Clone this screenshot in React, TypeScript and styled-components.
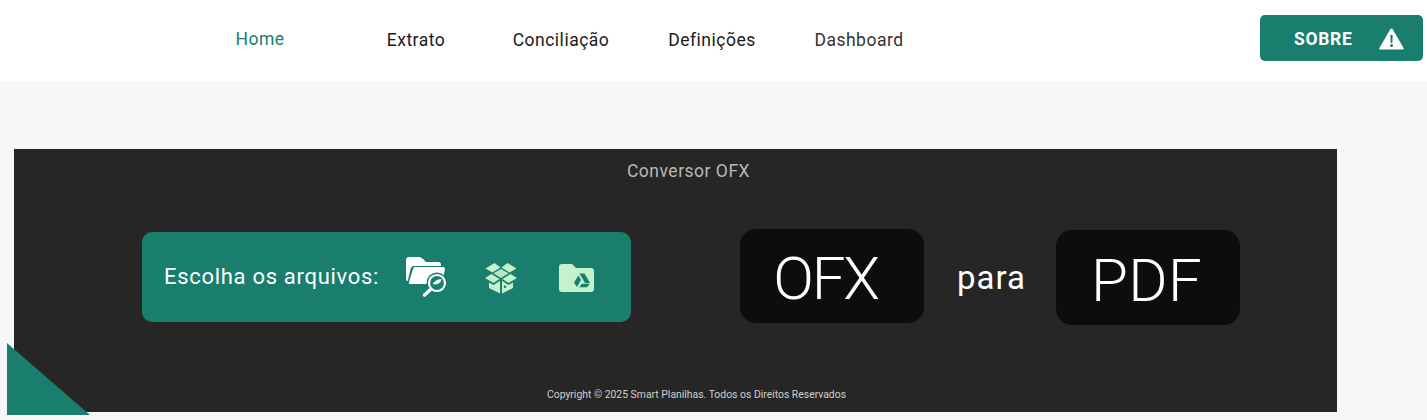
import React from "react";
import styled, { createGlobalStyle } from "styled-components";

const Global = createGlobalStyle`
  html, body { margin: 0; padding: 0; background: #f7f7f7; overflow: hidden; }
  body { font-family: Roboto, "Liberation Sans", sans-serif; }
`;
const Page = styled.div`
  position: relative;
  width: 1427px;
  height: 420px;
  overflow: hidden;
`;
const Header = styled.header`
  height: 81px;
  background: #fff;
  display: flex;
  align-items: center;
  padding-left: 180px;
  padding-right: 4px;
`;
const Nav = styled.nav`
  display: flex;
  align-items: center;
  flex: 1;
`;
const NavLink = styled.a<{ $w: number; $color?: string; $up?: boolean }>`
  width: ${(p) => p.$w}px;
  text-align: center;
  font-size: 17.5px;
  font-weight: 400;
  letter-spacing: 0.5px;
  color: ${(p) => p.$color || "#1a1a1a"};
  margin-top: ${(p) => (p.$up ? -4 : -1)}px;
`;
const AboutButton = styled.button`
  width: 163px;
  height: 46px;
  margin-top: -5px;
  border: 0;
  border-radius: 5px;
  background: #197e6d;
  color: #fff;
  display: flex;
  align-items: center;
  padding: 1px 19px 0 34px;
  justify-content: space-between;
  font-family: inherit;
  font-size: 17.5px;
  font-weight: 700;
  letter-spacing: 0.7px;
`;
const Card = styled.main`
  margin: 68px 0 0 14px;
  width: 1323px;
  height: 263px;
  background: #262626;
  display: flex;
  flex-direction: column;
  color: #fff;
`;
const Title = styled.div`
  height: 44px;
  padding-left: 26px;
  display: flex;
  align-items: center;
  justify-content: center;
  font-size: 17.5px;
  font-weight: 400;
  letter-spacing: 0.5px;
  color: #b8b8b8;
`;
const Row = styled.div`
  display: flex;
  align-items: flex-start;
  height: 96px;
  margin-top: 36px;
  padding-left: 128px;
`;
const Upload = styled.div`
  width: 489px;
  height: 90px;
  background: #197e6d;
  border-radius: 10px;
  display: flex;
  align-items: center;
  padding-left: 22px;
  box-sizing: border-box;
  margin-right: 109px;
  margin-top: 3px;
`;
const UploadLabel = styled.span`
  width: 242px;
  margin-top: -2px;
  font-size: 22px;
  font-weight: 400;
  letter-spacing: 0.7px;
  white-space: nowrap;
`;
const IconSlot = styled.span<{ $w: number; $nudge?: number }>`
  width: ${(p) => p.$w}px;
  display: flex;
  align-items: center;
  margin-top: ${(p) => p.$nudge || 0}px;
`;
const Format = styled.div<{ $h: number; $top?: number; $right: number; $spacing: number }>`
  width: 184px;
  height: ${(p) => p.$h}px;
  margin-top: ${(p) => p.$top || 0}px;
  box-sizing: border-box;
  padding: 5px ${(p) => p.$right}px 0 0;
  background: #0d0d0d;
  border-radius: 16px;
  display: flex;
  align-items: center;
  justify-content: center;
  font-size: 60px;
  font-weight: 300;
  letter-spacing: ${(p) => p.$spacing}px;
  color: #fff;
`;
const Para = styled.div`
  width: 132px;
  margin-top: 29px;
  padding-left: 3px;
  box-sizing: border-box;
  text-align: center;
  font-size: 33px;
  font-weight: 400;
  letter-spacing: 1px;
`;
const Copyright = styled.footer`
  margin-top: 63px;
  padding-left: 42px;
  text-align: center;
  font-size: 10.4px;
  color: #cfcfcf;
`;
const Corner = styled.div`
  position: absolute;
  left: 7px;
  top: 343px;
  width: 83px;
  height: 72px;
  background: #197e6d;
  clip-path: polygon(0 0, 100% 100%, 0 100%);
`;

const Warning = () => (
  <svg width="25" height="22" viewBox="0 0 25 22">
    <path fillRule="evenodd" fill="#fff" d="M12.5 0.5 C13 0.5 13.4 0.8 13.7 1.3 L24.6 20 C25 20.8 24.5 21.6 23.6 21.6 H1.4 C0.5 21.6 0 20.8 0.4 20 L11.3 1.3 C11.6 0.8 12 0.5 12.5 0.5 Z M11.3 7 L11.7 15 H13.3 L13.7 7 Z M12.5 16 A1.5 1.5 0 1 0 12.5 19 A1.5 1.5 0 1 0 12.5 16 Z" />
  </svg>
);
const FolderSearch = () => (
  <svg width="42" height="40" viewBox="0 0 42 40">
    <path fill="#fff" d="M0 3 Q0 0 3 0 H13 Q15 0 17 2 L20 5 H32 Q35 5 35 8 V9 H8 Q5.500 9 4.500 12 L1.800 24 Q0 24 0 22 Z" />
    <path fill="#fff" d="M9 10 H37 Q39.500 10 38.800 13 L36 27 H3.500 Q2.500 27 3 25 L6.800 12.500 Q7.500 10 9 10 Z" />
    <circle cx="31" cy="26" r="10.500" fill="#197e6d" />
    <circle cx="31" cy="26" r="8" fill="none" stroke="#fff" strokeWidth="2.200" />
    <path fill="#fff" d="M26.500 27 Q30 21.800 35.800 22.300 Q33.500 29 26.500 27 Z" />
    <path d="M24.500 32.500 L18.500 38" stroke="#fff" strokeWidth="3.400" strokeLinecap="round" />
  </svg>
);
const OpenBox = () => (
  <svg width="32" height="31" viewBox="0 0 32 31" fill="#c5f1cb">
    <path d="M9.500 0 L15.500 4.500 L7.500 9.500 L0.500 5.500 Z" />
    <path d="M22.500 0 L31.500 5.500 L24.500 9.500 L16.500 4.500 Z" />
    <path d="M6.500 11 L14.500 16 L8.500 20 L0 15 Z" />
    <path d="M25.500 11 L32 15 L23.500 20 L17.500 16 Z" />
    <path d="M8.500 10.300 L16 6 L23.500 10.300 L16 15 Z" fillOpacity="0.92" />
    <path d="M4 19.500 L8.500 22 L15 17.800 V30.500 L4 25 Z" />
    <path fillRule="evenodd" d="M17 17.800 L23.500 22 L28 19.500 V25 L17 30.500 Z M20 22.500 A1.200 1.200 0 1 0 20 25 A1.200 1.200 0 1 0 20 22.500 Z" />
  </svg>
);
const DriveFolder = () => (
  <svg width="35" height="28" viewBox="0 0 35 28">
    <path fill="#c5f1cb" d="M0 3 Q0 0 3 0 H13 L17 4 H32 Q35 4 35 7 V25 Q35 28 32 28 H3 Q0 28 0 25 Z" />
    <path fill="#197e6d" d="M20.500 9.500 H25.500 L31 19 H26 Z M19.500 11.500 L22 16 L18 23 L15 18.500 Z M23 19.800 H31 L28 23.300 H20.200 Z" />
  </svg>
);

export default function App() {
  return (
    <Page>
      <Global />
      <Header>
        <Nav>
          <NavLink $w={160} $color="#197e6d" $up>Home</NavLink>
          <NavLink $w={152}>Extrato</NavLink>
          <NavLink $w={138}>Conciliação</NavLink>
          <NavLink $w={164}>Definições</NavLink>
          <NavLink $w={130} $color="#333">Dashboard</NavLink>
        </Nav>
        <AboutButton>
          SOBRE
          <Warning />
        </AboutButton>
      </Header>
      <Card>
        <Title>Conversor OFX</Title>
        <Row>
          <Upload>
            <UploadLabel>Escolha os arquivos:</UploadLabel>
            <IconSlot $w={79}><FolderSearch /></IconSlot>
            <IconSlot $w={74} $nudge={2}><OpenBox /></IconSlot>
            <IconSlot $w={35} $nudge={1}><DriveFolder /></IconSlot>
          </Upload>
          <Format $h={94} $right={13} $spacing={-2.2}>OFX</Format>
          <Para>para</Para>
          <Format $h={95} $top={1} $right={3} $spacing={0.4}>PDF</Format>
        </Row>
        <Copyright>Copyright © 2025 Smart Planilhas. Todos os Direitos Reservados</Copyright>
      </Card>
      <Corner />
    </Page>
  );
}
